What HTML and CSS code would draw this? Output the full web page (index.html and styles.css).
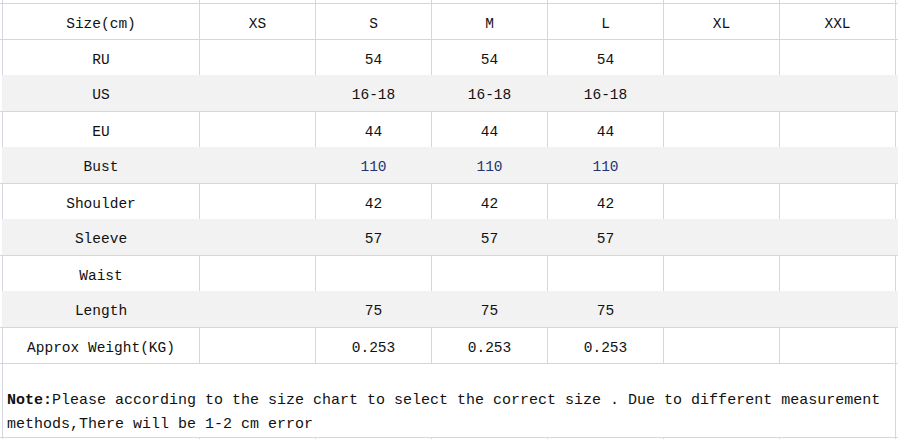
FILE: index.html
```html
<!DOCTYPE html>
<html>
<head>
<meta charset="utf-8">
<link rel="stylesheet" href="styles.css">
</head>
<body>
<div class="sheet">
  <div class="row strip top"><div></div><div></div><div></div><div></div><div></div><div></div><div></div><div></div><div></div></div>
  <div class="row"><div class="edge"></div><div class="c">Size(cm)</div><div class="c">XS</div><div class="c">S</div><div class="c">M</div><div class="c">L</div><div class="c">XL</div><div class="c">XXL</div><div class="edge"></div></div>
  <div class="row"><div class="edge"></div><div class="c">RU</div><div class="c"></div><div class="c">54</div><div class="c">54</div><div class="c">54</div><div class="c"></div><div class="c"></div><div class="edge"></div></div>
  <div class="row shaded"><div class="edge"></div><div class="c">US</div><div class="c"></div><div class="c">16-18</div><div class="c">16-18</div><div class="c">16-18</div><div class="c"></div><div class="c"></div><div class="edge"></div></div>
  <div class="row"><div class="edge"></div><div class="c">EU</div><div class="c"></div><div class="c">44</div><div class="c">44</div><div class="c">44</div><div class="c"></div><div class="c"></div><div class="edge"></div></div>
  <div class="row shaded"><div class="edge"></div><div class="c">Bust</div><div class="c"></div><div class="c blue">110</div><div class="c blue">110</div><div class="c blue">110</div><div class="c"></div><div class="c"></div><div class="edge"></div></div>
  <div class="row"><div class="edge"></div><div class="c">Shoulder</div><div class="c"></div><div class="c">42</div><div class="c">42</div><div class="c">42</div><div class="c"></div><div class="c"></div><div class="edge"></div></div>
  <div class="row shaded"><div class="edge"></div><div class="c">Sleeve</div><div class="c"></div><div class="c">57</div><div class="c">57</div><div class="c">57</div><div class="c"></div><div class="c"></div><div class="edge"></div></div>
  <div class="row"><div class="edge"></div><div class="c">Waist</div><div class="c"></div><div class="c"></div><div class="c"></div><div class="c"></div><div class="c"></div><div class="c"></div><div class="edge"></div></div>
  <div class="row shaded"><div class="edge"></div><div class="c">Length</div><div class="c"></div><div class="c">75</div><div class="c">75</div><div class="c">75</div><div class="c"></div><div class="c"></div><div class="edge"></div></div>
  <div class="row"><div class="edge"></div><div class="c">Approx Weight(KG)</div><div class="c"></div><div class="c">0.253</div><div class="c">0.253</div><div class="c">0.253</div><div class="c"></div><div class="c"></div><div class="edge"></div></div>
  <div class="row note-row"><div class="edge"></div><div class="note"><p class="note-text"><b>Note:</b>Please according to the size chart to select the correct size . Due to different measurement methods,There will be 1-2 cm error</p></div><div class="edge"></div></div>
  <div class="row strip bottom"><div></div><div></div><div></div><div></div><div></div><div></div><div></div><div></div><div></div></div>
</div>
</body>
</html>
```

FILE: styles.css
```css
html, body {
  margin: 0;
  padding: 0;
  background: #ffffff;
}

.sheet {
  width: 898px;
  height: 439px;
  overflow: hidden;
  font-family: "Liberation Mono", "DejaVu Sans Mono", monospace;
  color: #111111;
}

.row {
  display: grid;
  grid-template-columns: 2px 197px repeat(6, 116px) 3px;
  height: 36px;
  border-top: 1px solid #d6d6e0;
  box-sizing: border-box;
}

.row > div + div {
  border-left: 1px solid #d6d6e0;
}

.row.strip.top {
  height: 3px;
  border-top: none;
}

.row.strip.bottom {
  height: 2px;
}

.c {
  display: flex;
  align-items: center;
  justify-content: center;
  padding-top: 4px;
  box-sizing: border-box;
  font-size: 14.5px;
  white-space: nowrap;
}

.blue {
  color: #1f3670;
}

.row.shaded {
  border-top: none;
  background: #f2f2f2;
}

.row.shaded > div + div {
  border-left-color: transparent;
}

.row.shaded > .edge:first-child {
  background: #ffffff;
}

.row.note-row {
  height: 74px;
  grid-template-columns: 2px 893px 3px;
}

.note {
  display: flex;
  align-items: flex-end;
  padding: 0 4px;
}

.note-text {
  margin: 0;
  font-size: 15px;
  line-height: 24px;
  color: #111111;
}

.note-text b {
  font-weight: bold;
}
```
